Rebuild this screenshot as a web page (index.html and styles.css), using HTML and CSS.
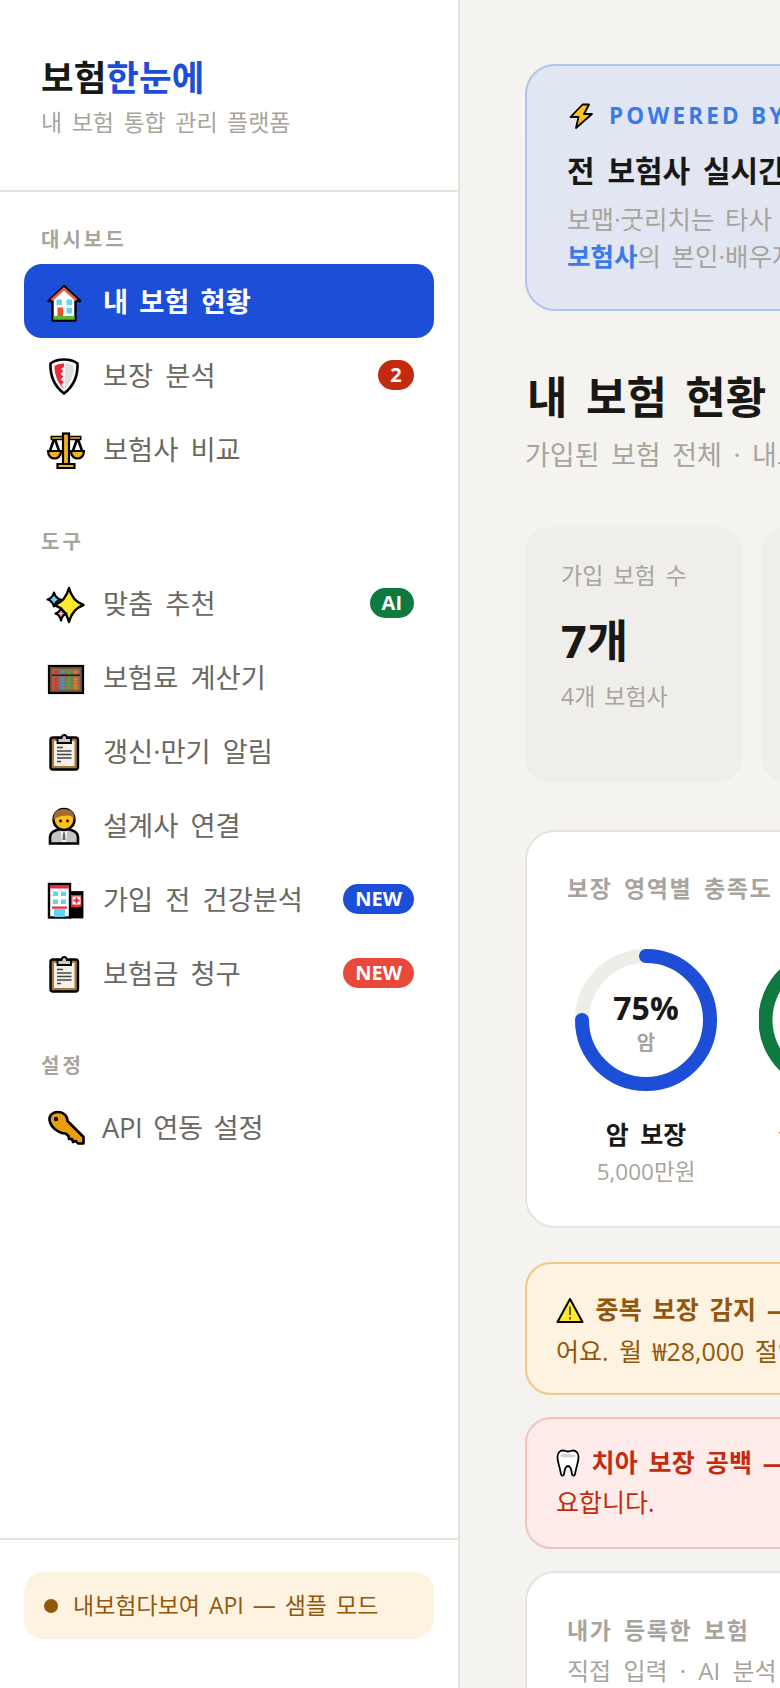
FILE: index.html
```html
<!DOCTYPE html>
<html lang="ko">
<head>
<meta charset="utf-8">
<title>보험한눈에</title>
<link rel="stylesheet" href="styles.css">
</head>
<body>
<div class="app">
  <aside class="sidebar">
    <header class="brand">
      <div class="logo">보험<span class="logo-accent">한눈에</span></div>
      <div class="tagline">내 보험 통합 관리 플랫폼</div>
    </header>
    <nav class="nav">
      <section class="nav-group">
        <div class="nav-label">대시보드</div>
        <a class="nav-item active">
          <svg class="ico" viewBox="0 0 36 36"><path d="M16 3 .5 18H4.500V37.500H27.500V18H32Z" fill="#fff" stroke="#000" stroke-width="2.400" stroke-linejoin="round"/><path d="M3.500 17 16 5.800 28.500 17" fill="none" stroke="#ea5a47" stroke-width="2.800"/><rect x="5.500" y="33" width="21" height="3.500" fill="#5cb531"/><rect x="8.500" y="16.500" width="5.500" height="5.500" fill="#61d4f2"/><rect x="18.500" y="16.500" width="5.500" height="5.500" fill="#61d4f2"/><rect x="18.500" y="25" width="5.500" height="5.500" fill="#61d4f2"/><rect x="9.500" y="24.500" width="5.500" height="8.500" fill="#e8502f"/></svg>
          <span class="nav-text">내 보험 현황</span>
        </a>
        <a class="nav-item">
          <svg class="ico" viewBox="0 0 36 36"><path d="M16 2.500C10 2.500 5 4.500 2.500 6.500 2 18 5.500 28.500 16 36.500 26.500 28.500 30 18 29.500 6.500 27 4.500 22 2.500 16 2.500Z" fill="#f4f4f4" stroke="#000" stroke-width="2.600"/><path d="M16 6.500C12 6.500 8.500 7.500 6.500 9 6.500 17 9.500 26 16 32L13.500 27.500 16 25 12.500 22.500 15.500 19.500 12.500 17 15.500 14 13 12 16 9.500Z" fill="#ea2a3a"/><path d="M17 6.500C20.500 6.500 23.500 7.500 25.500 9 25.500 17 22.500 26 17 31.500Z" fill="#dedede"/></svg>
          <span class="nav-text">보장 분석</span>
          <span class="badge badge-red">2</span>
        </a>
        <a class="nav-item">
          <svg class="ico" viewBox="0 0 36 36"><path d="M6.500 7 1.500 21M6.500 7 11.500 21M29.500 7 24.500 21M29.500 7 34.500 21" fill="none" stroke="#000" stroke-width="2.600"/><path d="M2.500 7H33.500" stroke="#000" stroke-width="4.500"/><path d="M4 7H32" stroke="#f1b31c" stroke-width="1.500"/><rect x="15" y="2.500" width="6" height="31" fill="#f1b31c" stroke="#000" stroke-width="2.200"/><path d="M0 20H13C13 30 0 30 0 20ZM23 20H36C36 30 23 30 23 20Z" fill="#f1b31c" stroke="#000" stroke-width="2.200"/><path d="M9.500 37V33H26.500V37Z" fill="#f1b31c" stroke="#000" stroke-width="2.200"/></svg>
          <span class="nav-text">보험사 비교</span>
        </a>
      </section>
      <section class="nav-group">
        <div class="nav-label">도구</div>
        <a class="nav-item">
          <svg class="ico" viewBox="0 0 36 36"><path d="M21 3C23 11 27 17 35.500 20 27 23 23 29 21 37 19 29 15 23 6.500 20 15 17 19 11 21 3Z" fill="#fcea2b" stroke="#000" stroke-width="2.400" stroke-linejoin="round"/><path d="M6 7.500C7 11 9 13.500 12.500 14.500 9 15.500 7 18 6 21.500 5 18 3 15.500-.5 14.500 3 13.500 5 11 6 7.500Z" fill="#61d4f2" stroke="#000" stroke-width="2.200" stroke-linejoin="round"/><path d="M13 23C13.800 26 15.500 27.500 18.500 28.500 15.500 29.500 13.800 31.500 13 35.500 12.200 31.500 10.500 29.500 7.500 28.500 10.500 27.500 12.200 26 13 23Z" fill="#f4a6d0" stroke="#000" stroke-width="2.200" stroke-linejoin="round"/></svg>
          <span class="nav-text">맞춤 추천</span>
          <span class="badge badge-green">AI</span>
        </a>
        <a class="nav-item">
          <svg class="ico" viewBox="0 0 36 36"><rect x="1" y="7" width="34" height="27" fill="#7a5530" stroke="#000" stroke-width="2.200"/><rect x="4" y="10" width="28" height="21" fill="#8c6f4f"/><rect x="4" y="15.500" width="28" height="1.500" fill="#2a1d12"/><g fill="#ea2a3a"><rect x="6" y="11.500" width="4" height="2.500"/><rect x="6" y="18.500" width="4" height="2.500"/><rect x="6" y="21.700" width="4" height="2.500"/><rect x="6" y="24.900" width="4" height="2.500"/><rect x="6" y="28" width="4" height="2.500"/></g><g fill="#3f8fe0"><rect x="12.500" y="11.500" width="4" height="2.500"/><rect x="12.500" y="18.500" width="4" height="2.500"/><rect x="12.500" y="21.700" width="4" height="2.500"/><rect x="12.500" y="24.900" width="4" height="2.500"/><rect x="12.500" y="28" width="4" height="2.500"/></g><g fill="#3fae4a"><rect x="19" y="11.500" width="4" height="2.500"/><rect x="19" y="18.500" width="4" height="2.500"/><rect x="19" y="21.700" width="4" height="2.500"/><rect x="19" y="24.900" width="4" height="2.500"/><rect x="19" y="28" width="4" height="2.500"/></g><g fill="#e8772e"><rect x="25.500" y="11.500" width="4" height="2.500"/><rect x="25.500" y="18.500" width="4" height="2.500"/><rect x="25.500" y="21.700" width="4" height="2.500"/><rect x="25.500" y="24.900" width="4" height="2.500"/><rect x="25.500" y="28" width="4" height="2.500"/></g></svg>
          <span class="nav-text">보험료 계산기</span>
        </a>
        <a class="nav-item">
          <svg class="ico" viewBox="0 0 36 36"><use href="#clipboard"/></svg>
          <span class="nav-text">갱신·만기 알림</span>
        </a>
        <a class="nav-item">
          <svg class="ico" viewBox="0 0 36 36"><path d="M2 36.500V30.500C2 25 8 22 16 22S30 25 30 30.500V36.500Z" fill="#c4c4c4" stroke="#000" stroke-width="2.600"/><path d="M12.500 24H19.500L18 35H14Z" fill="#efefef"/><path d="M15 25.500H17L17.500 33H14.500Z" fill="#6a6a6a"/><circle cx="16" cy="12.500" r="10.500" fill="#fcc21b" stroke="#000" stroke-width="2.400"/><path d="M5.500 13C5 5.500 9.500 2 16 2S27 5.500 26.500 13C25.500 10 23 8.500 20 8.500 16 8.500 10 9 5.500 13Z" fill="#a56a30"/><circle cx="12.500" cy="14" r="1.400" fill="#000"/><circle cx="19.500" cy="14" r="1.400" fill="#000"/></svg>
          <span class="nav-text">설계사 연결</span>
        </a>
        <a class="nav-item">
          <svg class="ico" viewBox="0 0 36 36"><rect x="1" y="3" width="21" height="33.500" fill="#fff" stroke="#000" stroke-width="2.400"/><rect x="2" y="4" width="19" height="3.500" fill="#ea2a3a"/><g fill="#61d4f2"><rect x="5" y="10.500" width="5" height="4.500"/><rect x="13" y="10.500" width="5" height="4.500"/><rect x="5" y="18.500" width="5" height="4.500"/><rect x="13" y="18.500" width="5" height="4.500"/><rect x="6" y="28" width="11" height="8"/></g><rect x="4" y="25.500" width="15" height="2.200" fill="#ea2a3a"/><rect x="22" y="11" width="12.500" height="25.500" fill="#000" stroke="#000" stroke-width="1.800"/><rect x="23" y="14" width="10.500" height="12" fill="#ea2a3a"/><rect x="24.500" y="15.500" width="8" height="8" fill="#fff"/><path d="M27.500 16.500H29.500V18.500H31.500V20.500H29.500V22.500H27.500V20.500H25.500V18.500H27.500Z" fill="#ea2a3a"/></svg>
          <span class="nav-text">가입 전 건강분석</span>
          <span class="badge badge-blue">NEW</span>
        </a>
        <a class="nav-item">
          <svg class="ico" viewBox="0 0 36 36"><use href="#clipboard"/></svg>
          <span class="nav-text">보험금 청구</span>
          <span class="badge badge-coral">NEW</span>
        </a>
      </section>
      <section class="nav-group">
        <div class="nav-label">설정</div>
        <a class="nav-item">
          <svg class="ico" viewBox="0 0 36 36"><path d="M1.500 11C1 6 5 3 10 3 15.500 3 19.500 7 19.500 12L35.500 28V34.500H30L28 32 25 33 24 30 21 30 20.500 27 17.500 24.500C10 24 2.500 18 1.500 11Z" fill="#ea9e0e" stroke="#000" stroke-width="2.600" stroke-linejoin="round"/><circle cx="8" cy="10" r="2.200" fill="#000"/></svg>
          <span class="nav-text nav-text-latin">API 연동 설정</span>
        </a>
      </section>
    </nav>
    <footer class="side-foot">
      <div class="api-status"><span class="status-dot"></span><span class="status-text">내보험다보여 API — 샘플 모드</span></div>
    </footer>
  </aside>

  <main class="main">
    <section class="hero">
      <div class="hero-kicker">
        <svg class="bolt" viewBox="0 0 24 26"><path d="M13.500 1.500 1.500 14H9.500L7 25 23 11H15L20 1.500Z" fill="#fcc21b" stroke="#000" stroke-width="1.800" stroke-linejoin="round"/></svg>
        <span class="kicker-text">POWERED BY CODEF API</span>
      </div>
      <h2 class="hero-title">전 보험사 실시간 보장 조회</h2>
      <p class="hero-text">보맵·굿리치는 타사 앱에 직접 입력해야 하지만, 이 서비스는<br><strong>보험사</strong>의 본인·배우자 계약을 한 번에 불러옵니다.</p>
    </section>

    <h1 class="page-title">내 보험 현황</h1>
    <p class="page-sub">가입된 보험 전체 · 내보험다보여 기준 · 2025년 6월 업데이트</p>

    <section class="stats">
      <div class="stat">
        <div class="stat-label">가입 보험 수</div>
        <div class="stat-value">7개</div>
        <div class="stat-note">4개 보험사</div>
      </div>
      <div class="stat">
        <div class="stat-label">월 납입 보험료</div>
        <div class="stat-value">₩318,000</div>
        <div class="stat-note">전월과 동일</div>
      </div>
    </section>

    <section class="card rings-card">
      <h3 class="card-title">보장 영역별 충족도</h3>
      <div class="rings">
        <div class="ring-item">
          <div class="ring">
            <svg class="ring-svg" viewBox="0 0 142 142"><circle class="ring-track" cx="71" cy="71" r="64"/><path class="ring-fill ring-blue" d="M71 7A64 64 0 1 1 7 71"/></svg>
            <div class="ring-center"><span class="ring-pct">75%</span><span class="ring-cat">암</span></div>
          </div>
          <div class="ring-name">암 보장</div>
          <div class="ring-sum">5,000만원</div>
        </div>
        <div class="ring-item">
          <div class="ring">
            <svg class="ring-svg" viewBox="0 0 142 142"><circle class="ring-track" cx="71" cy="71" r="64"/><path class="ring-fill ring-green" d="M71 7A64 64 0 1 1 27 24"/></svg>
            <div class="ring-center"><span class="ring-pct">90%</span><span class="ring-cat">실손</span></div>
          </div>
          <div class="ring-name">실손 보장</div>
          <div class="ring-sum">5,000만원</div>
        </div>
      </div>
    </section>

    <div class="alert alert-warn">
      <svg class="alert-ico" viewBox="0 0 28 26"><path d="M14 2 1.500 25H26.500Z" fill="#fcea2b" stroke="#000" stroke-width="2" stroke-linejoin="round"/><path d="M14 9.500V18M14 20V22.500" stroke="#5a4a00" stroke-width="1.800"/></svg>
      <strong>중복 보장 감지 —</strong> 삼성생명과 현대해상 실손보험이 중복되어 있<br>어요. 월 ₩28,000 절약 가능합니다.
    </div>
    <div class="alert alert-danger">
      <svg class="alert-ico tooth" viewBox="0 0 24 28"><path d="M7 1.500C3.500 1.500 1.500 4.500 1.500 8 1.500 14 4 18 5 25 5.500 27.500 7.500 27 8 25 8.500 21 9.500 17 12 17S15.500 21 16 25C16.500 27 18.500 27.500 19 25 20 18 22.500 14 22.500 8 22.500 4.500 20.500 1.500 17 1.500 15 1.500 14 2.500 12 2.500S9 1.500 7 1.500Z" fill="#fff" stroke="#000" stroke-width="1.800"/><path d="M4 7C5 4.500 9 4 12 5S19 4.500 20 7C17 9 7 9 4 7Z" fill="#d5d5d5"/></svg>
      <strong>치아 보장 공백 —</strong> 현재 치아 보험이 없어요. 임플란트 대비가 필<br>요합니다.
    </div>

    <section class="card list-card">
      <h3 class="card-title">내가 등록한 보험</h3>
      <p class="list-sub">직접 입력 · AI 분석 결과 포함</p>
    </section>
  </main>
</div>

<svg class="defs" width="0" height="0">
  <symbol id="clipboard" viewBox="0 0 36 36" overflow="visible">
    <rect x="2.500" y="4.500" width="27.500" height="32" rx="2.500" fill="#a57939" stroke="#000" stroke-width="2.400"/>
    <rect x="6" y="8" width="20.500" height="25" fill="#f4f1ea"/>
    <path d="M9.500 8.500V5H13.500C14 1 18.500 1 19 5H23V10H9.500Z" fill="#c9c9c9" stroke="#000" stroke-width="1.800"/>
    <path d="M9 14.500H15M9 18H23.500M9 21.500H23.500M9 25H23.500M9 28.500H13" stroke="#444" stroke-width="1.300"/>
  </symbol>
</svg>
</body>
</html>
```

FILE: styles.css
```css
* { box-sizing: border-box; }
html, body { margin: 0; padding: 0; height: 1688px; overflow: hidden; background: #f5f3ef; }
body { font-family: "Open Sans", "Noto Sans CJK KR", sans-serif; color: #1a1814; }
.defs { position: absolute; width: 0; height: 0; }

.app { display: flex; width: 780px; height: 1688px; overflow: hidden; }

/* Sidebar */
.sidebar { flex: none; width: 460px; height: 1688px; display: flex; flex-direction: column; background: #fff; border-right: 2px solid #e5e3dc; }
.brand { height: 192px; padding: 54px 41px 0; border-bottom: 2px solid #e5e3dc; }
.logo { font-size: 35.500px; line-height: 46px; font-weight: 700; }
.logo-accent { color: #1d4ed8; }
.tagline { margin-top: 5px; font-size: 23px; line-height: 34px; color: #a8a49c; word-spacing: 3.500px; }

.nav { padding: 34px 24px 0; }
.nav-group + .nav-group { margin-top: 42px; }
.nav-label { margin: 0 0 10px 17px; font-size: 20px; line-height: 28px; font-weight: 700; color: #a8a49c; letter-spacing: 3px; }
.nav-item { display: flex; align-items: center; gap: 19px; height: 74px; padding: 0 20px 0 24px; border-radius: 18px; font-size: 27.300px; color: #6b6860; word-spacing: 5px; }
.nav-item.active { background: #1d4ed8; color: #fff; font-weight: 700; word-spacing: 4px; }
.nav-text { flex: 1; padding-bottom: 3px; white-space: nowrap; }
.nav-text-latin { margin-left: -1px; letter-spacing: -.3px; word-spacing: 4px; }
.ico { flex: none; width: 36px; height: 36px; overflow: visible; }
.badge { flex: none; min-width: 36px; height: 30px; padding: 0 12px; border-radius: 15px; color: #fff; font-size: 20px; line-height: 30px; font-weight: 700; text-align: center; word-spacing: 0; }
.badge-red { background: #c42b0e; padding: 0 10px; }
.badge-green { background: #0f7a3f; }
.badge-blue { background: #1d4ed8; }
.badge-coral { background: #e8493a; }

.side-foot { margin-top: auto; height: 150px; padding: 32px 24px 0; border-top: 2px solid #e5e3dc; }
.api-status { display: flex; align-items: center; gap: 15px; height: 67px; padding: 0 20px; border-radius: 20px; background: #fef3e0; color: #92570a; font-size: 23px; white-space: nowrap; word-spacing: 3px; }
.status-text { padding-bottom: 4px; }
.status-dot { flex: none; width: 14px; height: 14px; border-radius: 50%; background: #92570a; }

/* Main */
.main { flex: none; width: 1040px; padding: 64px 0 0 65px; }
.hero { height: 247px; padding: 32px 40px 0; border: 2px solid #aec4ee; border-radius: 30px; background: linear-gradient(135deg, #e1e6f3, #e4e7f2); white-space: nowrap; }
.hero-kicker { display: flex; align-items: center; gap: 16px; height: 36px; padding-left: 2px; color: #3b7ae8; font-size: 22.500px; font-weight: 700; letter-spacing: 3.200px; }
.kicker-text { padding-bottom: 2px; }
.bolt { flex: none; width: 24px; height: 26px; }
.hero-title { margin: 15px 0 0; font-size: 30px; line-height: 44px; font-weight: 700; word-spacing: 5px; }
.hero-text { margin: 8px 0 0; font-size: 25.500px; line-height: 37px; color: #a8a49c; word-spacing: 4px; }
.hero-text strong { color: #3b7ae8; font-weight: 700; }

.page-title { margin: 56px 0 0 2px; font-size: 44px; line-height: 60px; font-weight: 700; word-spacing: 7px; }
.page-sub { margin: 10px 0 0 0; font-size: 27px; line-height: 36px; color: #a8a49c; white-space: nowrap; word-spacing: 4.500px; }

.stats { display: grid; grid-template-columns: 217px 217px; gap: 20px; margin-top: 54px; }
.stat { height: 255px; padding: 32px 36px 0; border-radius: 24px; background: #efeeea; white-space: nowrap; }
.stat-label { font-size: 23px; line-height: 32px; color: #a8a49c; word-spacing: 4px; }
.stat-value { margin-top: 20px; font-size: 45px; line-height: 60px; font-weight: 700; }
.stat-note { margin-top: 9px; font-size: 23px; line-height: 32px; color: #a8a49c; word-spacing: 3px; }

.card { border: 2px solid #e5e3dc; border-radius: 30px; background: #fff; }
.rings-card { height: 398px; margin-top: 48px; padding: 40px 40px 0; }
.card-title { margin: 0; font-size: 23px; line-height: 32px; font-weight: 700; color: #a8a49c; word-spacing: 4px; letter-spacing: 1.600px; }
.rings { display: flex; gap: 26px; margin-top: 45px; }
.ring-item { flex: none; width: 158px; display: flex; flex-direction: column; align-items: center; }
.ring { position: relative; width: 142px; height: 142px; }
.ring-svg { display: block; width: 142px; height: 142px; }
.ring-track, .ring-fill { fill: none; stroke-width: 14; }
.ring-track { stroke: #eeede8; }
.ring-fill { stroke-linecap: round; }
.ring-blue { stroke: #1d4ed8; }
.ring-green { stroke: #0f7a3f; }
.ring-center { position: absolute; inset: 0; padding-top: 5px; display: flex; flex-direction: column; align-items: center; justify-content: center; }
.ring-pct { font-size: 32px; line-height: 40px; font-weight: 700; }
.ring-cat { margin-top: 1px; font-size: 20px; line-height: 28px; font-weight: 700; color: #a8a49c; }
.ring-name { margin-top: 25px; font-size: 25px; line-height: 36px; font-weight: 700; word-spacing: 5px; }
.ring-sum { margin-top: 4px; font-size: 22.500px; line-height: 32px; color: #a8a49c; }

.alert { padding: 24px 0 24px 29px; border: 2px solid; border-radius: 26px; font-size: 25px; white-space: nowrap; word-spacing: 4px; }
.alert strong { font-weight: 700; letter-spacing: .2px; }
.alert-ico { display: inline-block; width: 28px; height: 26px; margin-right: 1px; vertical-align: -4px; }
.alert-ico.tooth { width: 24px; height: 28px; vertical-align: -5px; }
.alert-warn { height: 133px; margin-top: 34px; line-height: 42px; background: #fef3e0; border-color: #efc887; color: #92570a; }
.alert-danger { height: 132px; margin-top: 22px; padding-top: 23px; line-height: 40px; background: #fdecea; border-color: #f4c2bb; color: #c42b0e; }

.list-card { height: 400px; margin-top: 22px; padding: 41px 40px 0; }
.list-sub { margin: 9px 0 0; font-size: 24px; line-height: 32px; color: #a8a49c; word-spacing: 6px; }
```
